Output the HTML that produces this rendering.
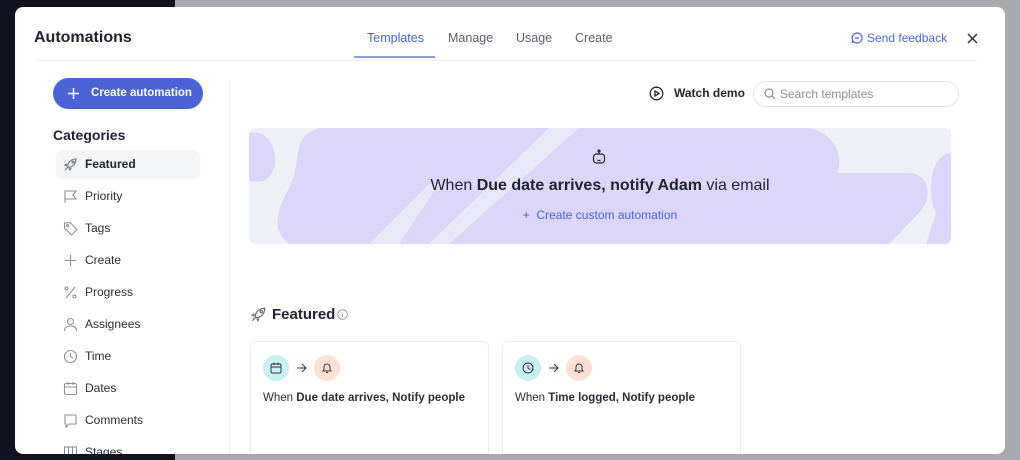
<!DOCTYPE html>
<html><head><style>
*{box-sizing:border-box;margin:0;padding:0}
body{width:1020px;height:460px;overflow:hidden;font-family:"Liberation Sans",sans-serif;background:#a9aaaf;position:relative;color:#1f2330}
.dark{position:absolute;left:0;top:0;width:175px;height:460px;background:#10121f}
.modal{position:absolute;left:15px;top:7px;width:990px;height:447px;background:#fff;border-radius:8px;overflow:hidden}
.abs{position:absolute}
.title{left:19px;top:22px;font-size:16px;font-weight:bold;color:#1f2330}
.tab{top:24px;font-size:12.5px;color:#5a5f6e}
.hline{left:20px;top:53px;width:942px;height:1px;background:#eceef2}
.vline{left:214px;top:74px;width:1px;height:380px;background:#f0f1f4}
.btn{left:38px;top:71px;width:150px;height:31px;border-radius:16px;background:#4a64d8;color:#fff;font-size:11.5px;font-weight:bold;line-height:31px;padding-left:38px;white-space:nowrap}
.cat{left:38px;top:120px;font-size:14px;font-weight:bold}
.item{left:41px;width:144px;height:29px;border-radius:6px;font-size:12px;color:#2a2e3a;line-height:29px;padding-left:29px}
.item svg{position:absolute;left:7px;top:7px}
.search{left:738px;top:74px;width:206px;height:26px;border:1px solid #e2e4ea;border-radius:13px;font-size:12px;color:#8a8f9c;line-height:24px;padding-left:26px}
.banner{left:234px;top:121px;width:702px;height:116px;border-radius:6px;background:#eef0f8;overflow:hidden}
.card{top:334px;width:239px;height:140px;border:1px solid #eceef2;border-radius:6px}
.ci{position:absolute;top:13px;width:26px;height:26px;border-radius:13px}
.ct{position:absolute;left:12px;top:50px;font-size:11.5px;color:#2a2e3a}
</style></head><body>
<div class="dark"></div>
<div class="modal">
<div class="abs title">Automations</div>
<div class="abs tab" style="left:352px;color:#4a64d8">Templates</div>
<div class="abs" style="left:339px;top:49px;width:81px;height:2px;background:#8f9bea"></div>
<div class="abs tab" style="left:433px">Manage</div>
<div class="abs tab" style="left:501px">Usage</div>
<div class="abs tab" style="left:560px">Create</div>
<svg class="abs" style="left:836px;top:25px" width="12" height="12" viewBox="0 0 12 12" fill="none" stroke="#4a64d8" stroke-width="1.2"><path d="M6 1a5 5 0 1 1-4 8L1 11l.8-2.6A5 5 0 0 1 6 1z"/><path d="M4 6h4"/></svg>
<div class="abs" style="left:852px;top:24px;font-size:12px;color:#4a64d8">Send feedback</div>
<svg class="abs" style="left:952px;top:26px" width="11" height="11" stroke="#333" stroke-width="1.5"><path d="M1 1l9 9M10 1l-9 9"/></svg>
<div class="abs hline"></div>
<div class="abs vline"></div>
<div class="abs btn">Create automation</div>
<svg class="abs" style="left:52px;top:80px" width="13" height="13" stroke="#fff" stroke-width="1.5"><path d="M6.5 1v11M1 6.5h11"/></svg>
<div class="abs cat">Categories</div>
<div class="abs item" style="top:143px;background:#f4f5f8;font-weight:bold;color:#1f2330"><svg width="15" height="15" viewBox="0 0 15 15" fill="none" stroke="#6b7080" stroke-width="1.1"><path d="M5 10c-1-3 2-8 8-8-0 6-5 9-8 8zM5 10l-3 3M4 7L2 8l2 1M8 11l-1 2-1-2"/><circle cx="10" cy="5" r="1"/></svg>Featured</div>
<div class="abs item" style="top:175px"><svg width="15" height="15" fill="none" stroke="#8a8f9c" stroke-width="1.1"><path d="M2 14V2h11l-3 4 3 4H2"/></svg>Priority</div>
<div class="abs item" style="top:207px"><svg width="15" height="15" fill="none" stroke="#8a8f9c" stroke-width="1.1"><path d="M1.5 2v5l7 7 5.5-5.5-7-7z"/><circle cx="4.5" cy="4.5" r="1"/></svg>Tags</div>
<div class="abs item" style="top:239px"><svg width="15" height="15" fill="none" stroke="#8a8f9c" stroke-width="1.1"><path d="M7.5 2v11M2 7.5h11"/></svg>Create</div>
<div class="abs item" style="top:271px"><svg width="15" height="15" fill="none" stroke="#8a8f9c" stroke-width="1.1"><path d="M12 2L3 13"/><circle cx="3.5" cy="3.5" r="1.5"/><circle cx="11.5" cy="11.5" r="1.5"/></svg>Progress</div>
<div class="abs item" style="top:303px"><svg width="15" height="15" fill="none" stroke="#8a8f9c" stroke-width="1.1"><circle cx="7.5" cy="4.5" r="3"/><path d="M1.5 14c0-4 3-5 6-5s6 1 6 5"/></svg>Assignees</div>
<div class="abs item" style="top:335px"><svg width="15" height="15" fill="none" stroke="#8a8f9c" stroke-width="1.1"><circle cx="7.5" cy="7.5" r="6"/><path d="M7.5 4v3.5l2.5 2"/></svg>Time</div>
<div class="abs item" style="top:367px"><svg width="15" height="15" fill="none" stroke="#8a8f9c" stroke-width="1.1"><rect x="1.5" y="2.5" width="12" height="11" rx="1.5"/><path d="M1.5 6h12M5 1v3M10 1v3"/></svg>Dates</div>
<div class="abs item" style="top:399px"><svg width="15" height="15" fill="none" stroke="#8a8f9c" stroke-width="1.1"><path d="M2 2h11v9H6l-3 3v-3H2z"/></svg>Comments</div>
<div class="abs item" style="top:431px"><svg width="15" height="15" fill="none" stroke="#8a8f9c" stroke-width="1.1"><rect x="1.5" y="2" width="12" height="11"/><path d="M5.5 2v11M9.5 2v11"/></svg>Stages</div>
<svg class="abs" style="left:634px;top:79px" width="15" height="15" fill="none" stroke="#1f2330" stroke-width="1.3"><circle cx="7.5" cy="7.5" r="6.3"/><path d="M6 5v5l4-2.5z"/></svg>
<div class="abs" style="left:659px;top:79px;font-size:12px;font-weight:bold">Watch demo</div>
<div class="abs search">Search templates</div>
<svg class="abs" style="left:749px;top:81px" width="12" height="12" fill="none" stroke="#8a8f9c" stroke-width="1.2"><circle cx="5" cy="5" r="4"/><path d="M8 8l3 3"/></svg>
<div class="abs banner">
<svg width="702" height="116" style="position:absolute;left:0;top:0"><g fill="#ddd6fb">
<path d="M70 0H560c30 5 40 40 20 55-20 15-60 15-80 20L220 116H40C20 100 30 80 40 60 55 30 40 10 70 0z"/>
<path d="M560 0c10 0 20 20 10 35l-20 10h110c20 0 25 25 10 40l-30 31H200l200-80z"/>
<path d="M0 5c20-5 30 20 25 35-5 15-15 15-25 13z"/>
<path d="M702 25c-20 0-25 40-15 60l-10 31h25z"/>
</g>
<g fill="#eef0f8"><path d="M300 0h30L200 116h-20z" opacity=".7"/><path d="M120 116l60-60h10l-40 60z" opacity=".7"/></g></svg>
<svg style="position:absolute;left:342px;top:21px" width="16" height="16" fill="none" stroke="#1f2330" stroke-width="1.2"><rect x="2.5" y="5" width="11" height="9" rx="3"/><path d="M8 5V3"/><circle cx="8" cy="2" r="1"/><path d="M6 9.5v.2M10 9.5v.2M6.5 11.5h3"/></svg>
<div style="position:absolute;left:0;width:702px;top:49px;text-align:center;font-size:16px;color:#1f2330">When <b>Due date arrives, notify Adam</b> via email</div>
<div style="position:absolute;left:0;width:702px;top:80px;text-align:center;font-size:12px;color:#4a64d8">+&nbsp; Create custom automation</div>
</div>
<svg class="abs" style="left:235px;top:299px" width="17" height="17" viewBox="0 0 15 15" fill="none" stroke="#6b7080" stroke-width="1.1"><path d="M5 10c-1-3 2-8 8-8-0 6-5 9-8 8zM5 10l-3 3M4 7L2 8l2 1M8 11l-1 2-1-2"/><circle cx="10" cy="5" r="1"/></svg>
<div class="abs" style="left:257px;top:299px;font-size:15px;font-weight:bold">Featured</div>
<svg class="abs" style="left:322px;top:302px" width="11" height="11" fill="none" stroke="#9a9ea9"><circle cx="5.5" cy="5.5" r="4.8"/><path d="M5.5 5v3M5.5 3v.5"/></svg>
<div class="abs card" style="left:235px">
<div class="ci" style="left:12px;background:#c7f0f2"></div>
<svg class="abs" style="left:19px;top:20px" width="12" height="12" fill="none" stroke="#333" stroke-width="1"><rect x="1" y="2" width="10" height="9" rx="1.5"/><path d="M1 5h10M4 .5v2.5M8 .5v2.5"/></svg>
<svg class="abs" style="left:45px;top:21px" width="11" height="10" fill="none" stroke="#333"><path d="M1 5h9M6 1l4 4-4 4"/></svg>
<div class="ci" style="left:63px;background:#fde0d4"></div>
<svg class="abs" style="left:70px;top:20px" width="12" height="12" fill="none" stroke="#333"><path d="M2 9h8L9 7.5V5a3 3 0 0 0-6 0v2.5zM5 10.5h2"/></svg>
<div class="ct">When <b>Due date arrives, Notify people</b></div>
</div>
<div class="abs card" style="left:487px">
<div class="ci" style="left:12px;background:#c7f0f2"></div>
<svg class="abs" style="left:19px;top:20px" width="12" height="12" fill="none" stroke="#333"><circle cx="6" cy="6" r="5"/><path d="M6 3v3l2 1.5"/></svg>
<svg class="abs" style="left:45px;top:21px" width="11" height="10" fill="none" stroke="#333"><path d="M1 5h9M6 1l4 4-4 4"/></svg>
<div class="ci" style="left:63px;background:#fde0d4"></div>
<svg class="abs" style="left:70px;top:20px" width="12" height="12" fill="none" stroke="#333"><path d="M2 9h8L9 7.5V5a3 3 0 0 0-6 0v2.5zM5 10.5h2"/></svg>
<div class="ct">When <b>Time logged, Notify people</b></div>
</div>
</div>
</body></html>
